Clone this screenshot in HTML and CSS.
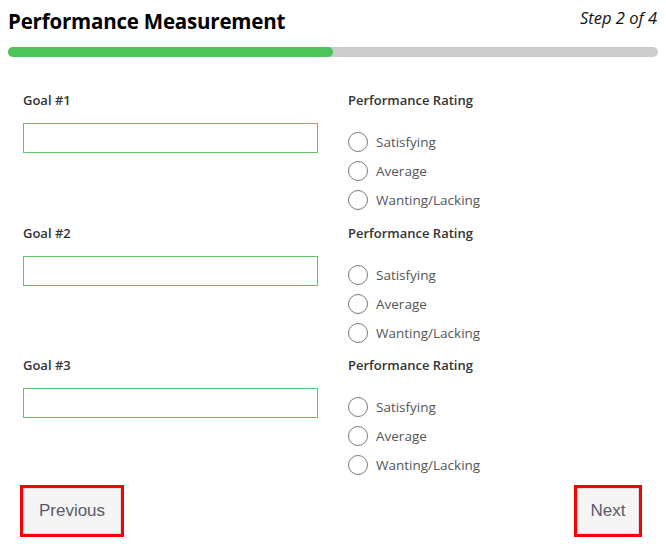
FILE: index.html
```html
<html>
  <head>
    <meta charset="utf-8"/>
    <title>Performance Measurement</title>
    <link rel="stylesheet" href="styles.css">
  </head>
  <body>
    <div id="wizard">

      <div id="wizard-header">
        <h1 id="wizard-title">Performance Measurement</h1>
        <span id="wizard-step">Step 2 of 4</span>
      </div>

      <div id="wizard-progress">
        <div id="wizard-progress-fill" style="width: 50%"></div>
      </div>

      <form id="wizard-goals">

        <div class="goal-row">
          <div class="goal-col">
            <label class="goal-label" for="goal-1">Goal #1</label>
            <input id="goal-1" class="goal-input" type="text"/>
          </div>
          <div class="goal-col">
            <div class="goal-label">Performance Rating</div>
            <div class="rating-list">
              <label class="rating"><input type="radio" name="rating-1"/><span>Satisfying</span></label>
              <label class="rating"><input type="radio" name="rating-1"/><span>Average</span></label>
              <label class="rating"><input type="radio" name="rating-1"/><span>Wanting/Lacking</span></label>
            </div>
          </div>
        </div>

        <div class="goal-row">
          <div class="goal-col">
            <label class="goal-label" for="goal-2">Goal #2</label>
            <input id="goal-2" class="goal-input" type="text"/>
          </div>
          <div class="goal-col">
            <div class="goal-label">Performance Rating</div>
            <div class="rating-list">
              <label class="rating"><input type="radio" name="rating-2"/><span>Satisfying</span></label>
              <label class="rating"><input type="radio" name="rating-2"/><span>Average</span></label>
              <label class="rating"><input type="radio" name="rating-2"/><span>Wanting/Lacking</span></label>
            </div>
          </div>
        </div>

        <div class="goal-row">
          <div class="goal-col">
            <label class="goal-label" for="goal-3">Goal #3</label>
            <input id="goal-3" class="goal-input" type="text"/>
          </div>
          <div class="goal-col">
            <div class="goal-label">Performance Rating</div>
            <div class="rating-list">
              <label class="rating"><input type="radio" name="rating-3"/><span>Satisfying</span></label>
              <label class="rating"><input type="radio" name="rating-3"/><span>Average</span></label>
              <label class="rating"><input type="radio" name="rating-3"/><span>Wanting/Lacking</span></label>
            </div>
          </div>
        </div>

      </form>

      <div id="wizard-nav">
        <button id="wizard-prev" class="nav-button" type="button">Previous</button>
        <button id="wizard-next" class="nav-button" type="button">Next</button>
      </div>

    </div>
  </body>
</html>
```

FILE: styles.css
```css
body
{
margin: 8px;
background-color: #FFFFFF;
font-family: "Open Sans","Noto Sans",Arial,sans-serif;
}

#wizard-header
{
display: flex;
justify-content: space-between;
align-items: flex-start;
height: 39px;
}

#wizard-title
{
margin: 0px;
font-size: 20.5px;
font-weight: 700;
line-height: 26px;
color: #000000;
letter-spacing: -0.2px;
}

#wizard-step
{
margin-top: 0px;
margin-right: 1px;
font-size: 16.5px;
font-style: italic;
line-height: 20px;
color: #111111;
}

#wizard-progress
{
height: 10px;
border-radius: 5px;
background-color: #CCCCCC;
}

#wizard-progress-fill
{
height: 10px;
border-radius: 5px;
background-color: #4CC45A;
}

#wizard-goals
{
margin: 34px 0px 0px 0px;
}

.goal-row
{
display: grid;
grid-template-columns: 1fr 1fr;
height: 132.5px;
}

.goal-col
{
padding: 0px 15px;
}

.goal-label
{
display: block;
font-size: 13px;
font-weight: 600;
line-height: 18px;
color: #333333;
}

.goal-input
{
display: block;
box-sizing: border-box;
width: 100%;
height: 30px;
margin-top: 14px;
border: 1px solid #5CC766;
outline: none;
}

.rating-list
{
display: flex;
flex-direction: column;
gap: 9px;
margin-top: 23px;
}

.rating
{
display: flex;
align-items: center;
gap: 8px;
font-size: 13.5px;
line-height: 20px;
color: #555555;
}

.rating input
{
appearance: none;
margin: 0px;
width: 20px;
height: 20px;
border: 1px solid #7A7A7A;
border-radius: 50%;
background-color: #FFFFFF;
}

#wizard-nav
{
display: flex;
justify-content: space-between;
padding: 0px 19px 0px 15px;
margin-top: -1px;
}

.nav-button
{
box-sizing: border-box;
height: 46px;
padding: 0px;
border: 1px solid #DDDDDD;
outline: 3px solid #FF0000;
background-color: #F5F5F5;
font-family: "Liberation Sans",Arial,sans-serif;
font-size: 17px;
color: #5A5A6A;
}

#wizard-prev
{
width: 98px;
}

#wizard-next
{
width: 62px;
}
```
